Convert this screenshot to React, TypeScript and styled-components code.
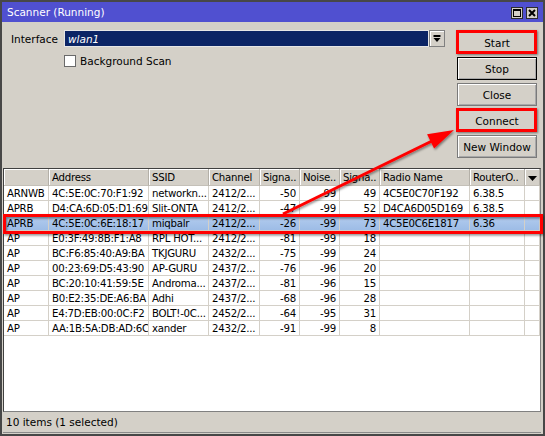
import React from 'react';
import styled, { createGlobalStyle, css } from 'styled-components';

const Global = createGlobalStyle`
  html, body { margin: 0; padding: 0; background: #d4d0c8; }
  body { font-family: "DejaVu Sans", Verdana, sans-serif; font-size: 10.5px; color: #000; }
  * { box-sizing: border-box; }
`;

const Window = styled.div`
  position: relative;
  width: 545px;
  height: 436px;
  border: 2px solid #474747;
  background: #d4d0c8;
  display: flex;
  flex-direction: column;
`;

const TitleBar = styled.div`
  height: 20px;
  flex: none;
  background: #5050d0;
  color: #fff;
  display: flex;
  align-items: center;
  padding: 0 5px;
`;

const Title = styled.div`
  flex: 1;
  font-size: 10.5px;
`;

const TitleButtons = styled.div`
  display: flex;
  gap: 3px;
  margin-top: 2px;
`;

const TitleButton = styled.div`
  width: 12px;
  height: 12px;
  background: #d4d0c8;
  border: 1px solid #2e2e2e;
  display: flex;
  align-items: center;
  justify-content: center;
`;

const Body = styled.div`
  flex: 1;
  min-height: 0;
  display: flex;
  flex-direction: column;
  padding-top: 8px;
`;

const Top = styled.div`
  display: flex;
  margin-bottom: 10px;
`;

const Form = styled.div`
  flex: 1;
  padding-left: 9px;
  display: flex;
  flex-direction: column;
  gap: 8px;
`;

const FieldRow = styled.div`
  display: flex;
  align-items: center;
  height: 17px;
`;

const Label = styled.span`
  width: 53px;
`;

const Input = styled.div`
  width: 365px;
  height: 17px;
  background: #0b2465;
  border: 1px solid #e6e6e6;
  color: #fff;
  font-style: italic;
  padding-left: 3px;
  display: flex;
  align-items: center;
`;

const DropButton = styled.div`
  width: 16px;
  height: 17px;
  background: #d4d0c8;
  border: 1px solid #808080;
  box-shadow: inset 1px 1px #fff;
  display: flex;
  align-items: center;
  justify-content: center;
`;

const CheckRow = styled.label`
  display: flex;
  align-items: center;
  gap: 4px;
  margin-left: 53px;
  height: 12px;
`;

const CheckBox = styled.span`
  width: 12px;
  height: 12px;
  background: #fff;
  border: 1px solid #6a6a6a;
`;

const ButtonColumn = styled.div`
  width: 80px;
  margin: 0 6px 0 12px;
  padding-top: 1px;
  display: flex;
  flex-direction: column;
  gap: 3px;
`;

const Button = styled.button<{ $default?: boolean; $highlight?: boolean }>`
  position: relative;
  width: 80px;
  height: 23px;
  padding: 0;
  font: inherit;
  color: #000;
  background: #d4d0c8;
  border: 1px solid ${p => (p.$default ? '#000' : '#7a7a7a')};
  box-shadow: inset 1px 1px #fff, inset -1px -1px #a8a8a8;
  ${p =>
    p.$highlight &&
    css`
      &::after {
        content: '';
        position: absolute;
        inset: -2px -1px -1px -2px;
        border: 3px solid #ff0000;
        box-shadow: 1px 1px 2px rgba(0, 0, 0, 0.45);
        pointer-events: none;
      }
    `}
`;

const TablePanel = styled.div`
  flex: 1;
  min-height: 0;
  margin: 0 2px 0 1px;
  background: #fff;
  border: 1px solid #808080;
  border-left-color: #404040;
  border-top-color: #404040;
`;

const Grid = styled.table`
  border-collapse: separate;
  border-spacing: 0;
  table-layout: fixed;
  width: 536px;
  font-size: 10.2px;
  letter-spacing: -0.25px;
`;

const Th = styled.th<{ $w: number }>`
  width: ${p => p.$w}px;
  height: 17px;
  padding: 0 3px;
  background: #d4d0c8;
  font-weight: normal;
  text-align: left;
  white-space: nowrap;
  overflow: hidden;
  border-right: 1px solid #b4b0a8;
  border-bottom: 1px solid #c4c0b8;
  box-shadow: inset 1px 1px #fff;
`;

const Td = styled.td<{ $right?: boolean; $selected?: boolean }>`
  height: 15px;
  padding: 0 3px;
  white-space: nowrap;
  overflow: hidden;
  text-align: ${p => (p.$right ? 'right' : 'left')};
  border-right: 1px solid #d4d0c8;
  border-bottom: 1px solid #d4d0c8;
  background: ${p => (p.$selected ? 'linear-gradient(#b3ccee, #9dbce6)' : 'transparent')};
`;

const StatusBar = styled.div`
  height: 21px;
  flex: none;
  margin: 0 2px 1px 1px;
  padding-left: 3px;
  display: flex;
  align-items: center;
  border-bottom: 1px solid #8a8a8a;
`;

const Overlay = styled.svg`
  position: absolute;
  top: -2px;
  left: -2px;
  pointer-events: none;
`;

type Row = [string, string, string, string, string, string, string, string, string];

const rows: Row[] = [
  ['ARNWB', '4C:5E:0C:70:F1:92', 'networkn...', '2412/2...', '-50', '-99', '49', '4C5E0C70F192', '6.38.5'],
  ['APRB', 'D4:CA:6D:05:D1:69', 'Slit-ONTA', '2412/2...', '-47', '-99', '52', 'D4CA6D05D169', '6.38.5'],
  ['APRB', '4C:5E:0C:6E:18:17', 'miqbalr', '2412/2...', '-26', '-99', '73', '4C5E0C6E1817', '6.36'],
  ['AP', 'E0:3F:49:8B:F1:A8', 'RPL HOT...', '2412/2...', '-81', '-99', '18', '', ''],
  ['AP', 'BC:F6:85:40:A9:BA', 'TKJGURU', '2432/2...', '-75', '-99', '24', '', ''],
  ['AP', '00:23:69:D5:43:90', 'AP-GURU', '2437/2...', '-76', '-96', '20', '', ''],
  ['AP', 'BC:20:10:41:59:5E', 'Androma...', '2437/2...', '-81', '-96', '15', '', ''],
  ['AP', 'B0:E2:35:DE:A6:BA', 'Adhi', '2437/2...', '-68', '-96', '28', '', ''],
  ['AP', 'E4:7D:EB:00:0C:F2', 'BOLT!-0C...', '2452/2...', '-64', '-95', '31', '', ''],
  ['AP', 'AA:1B:5A:DB:AD:6C', 'xander', '2432/2...', '-91', '-99', '8', '', ''],
];

const columns = [
  { label: '', w: 45 },
  { label: 'Address', w: 100 },
  { label: 'SSID', w: 60 },
  { label: 'Channel', w: 51 },
  { label: 'Signa..', w: 40, right: true },
  { label: 'Noise..', w: 40, right: true },
  { label: 'Signa..', w: 40, right: true },
  { label: 'Radio Name', w: 90 },
  { label: 'RouterO..', w: 55 },
];

export default function App() {
  return (
    <>
      <Global />
      <Window>
        <TitleBar>
          <Title>Scanner (Running)</Title>
          <TitleButtons>
            <TitleButton>
              <svg width="8" height="8" viewBox="0 0 8 8">
                <rect x="0.5" y="0.5" width="7" height="7" fill="none" stroke="#000" />
                <rect x="0" y="0" width="8" height="2" fill="#000" />
              </svg>
            </TitleButton>
            <TitleButton>
              <svg width="8" height="8" viewBox="0 0 8 8">
                <path d="M1 1 L7 7 M7 1 L1 7" stroke="#000" strokeWidth="2" />
              </svg>
            </TitleButton>
          </TitleButtons>
        </TitleBar>
        <Body>
          <Top>
            <Form>
              <FieldRow>
                <Label>Interface</Label>
                <Input>wlan1</Input>
                <DropButton>
                  <svg width="8" height="8" viewBox="0 0 8 8">
                    <rect x="0.5" y="0" width="7" height="2" fill="#000" />
                    <path d="M0.5 3 L7.5 3 L4 7 Z" fill="#000" />
                  </svg>
                </DropButton>
              </FieldRow>
              <CheckRow>
                <CheckBox />
                Background Scan
              </CheckRow>
            </Form>
            <ButtonColumn>
              <Button $highlight>Start</Button>
              <Button $default>Stop</Button>
              <Button>Close</Button>
              <Button $highlight>Connect</Button>
              <Button>New Window</Button>
            </ButtonColumn>
          </Top>
          <TablePanel>
            <Grid>
              <thead>
                <tr>
                  {columns.map((c, i) => (
                    <Th key={i} $w={c.w}>
                      {c.label}
                    </Th>
                  ))}
                  <Th $w={15} style={{ padding: 0, textAlign: 'center' }}>
                    <svg width="9" height="5" viewBox="0 0 9 5">
                      <path d="M0 0 L9 0 L4.5 5 Z" fill="#000" />
                    </svg>
                  </Th>
                </tr>
              </thead>
              <tbody>
                {rows.map((r, ri) => (
                  <tr key={ri}>
                    {r.map((v, ci) => (
                      <Td key={ci} $right={columns[ci].right} $selected={ri === 2}>
                        {v}
                      </Td>
                    ))}
                    <Td $selected={ri === 2} />
                  </tr>
                ))}
              </tbody>
            </Grid>
          </TablePanel>
          <StatusBar>10 items (1 selected)</StatusBar>
        </Body>
        <Overlay width="545" height="436" viewBox="0 0 545 436">
          <defs>
            <filter id="sh" x="-10%" y="-10%" width="130%" height="130%">
              <feDropShadow dx="1" dy="1.5" stdDeviation="0.8" floodColor="#000" floodOpacity="0.45" />
            </filter>
          </defs>
          <g filter="url(#sh)">
            <rect x="4.5" y="215.5" width="537" height="17" fill="none" stroke="#ff0000" strokeWidth="3" />
            <line x1="283" y1="214" x2="434" y2="140" stroke="#ff0000" strokeWidth="3" />
            <path d="M454 130 L434.1 148.6 L427.1 134.2 Z" fill="#ff0000" />
          </g>
        </Overlay>
      </Window>
    </>
  );
}
